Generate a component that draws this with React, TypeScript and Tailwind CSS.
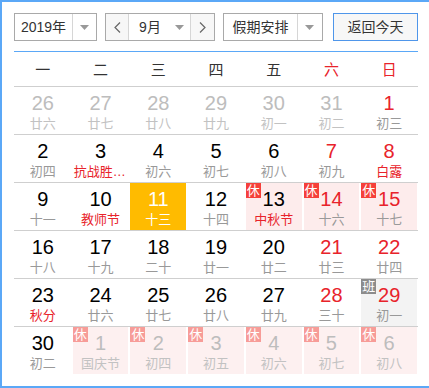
import type { ReactNode } from "react";

type Day = {
  n: number;
  lunar: string;
  other?: boolean;
  red?: boolean;
  fest?: boolean;
  today?: boolean;
  rest?: boolean;
  work?: boolean;
  faded?: boolean;
};

const weeks: Day[][] = [
  [
    { n: 26, lunar: "廿六", other: true },
    { n: 27, lunar: "廿七", other: true },
    { n: 28, lunar: "廿八", other: true },
    { n: 29, lunar: "廿九", other: true },
    { n: 30, lunar: "初一", other: true },
    { n: 31, lunar: "初二", other: true },
    { n: 1, lunar: "初三", red: true },
  ],
  [
    { n: 2, lunar: "初四" },
    { n: 3, lunar: "抗战胜利纪念日", fest: true },
    { n: 4, lunar: "初六" },
    { n: 5, lunar: "初七" },
    { n: 6, lunar: "初八" },
    { n: 7, lunar: "初九", red: true },
    { n: 8, lunar: "白露", red: true, fest: true },
  ],
  [
    { n: 9, lunar: "十一" },
    { n: 10, lunar: "教师节", fest: true },
    { n: 11, lunar: "十三", today: true },
    { n: 12, lunar: "十四" },
    { n: 13, lunar: "中秋节", fest: true, rest: true },
    { n: 14, lunar: "十六", red: true, rest: true },
    { n: 15, lunar: "十七", red: true, rest: true },
  ],
  [
    { n: 16, lunar: "十八" },
    { n: 17, lunar: "十九" },
    { n: 18, lunar: "二十" },
    { n: 19, lunar: "廿一" },
    { n: 20, lunar: "廿二" },
    { n: 21, lunar: "廿三", red: true },
    { n: 22, lunar: "廿四", red: true },
  ],
  [
    { n: 23, lunar: "秋分", fest: true },
    { n: 24, lunar: "廿六" },
    { n: 25, lunar: "廿七" },
    { n: 26, lunar: "廿八" },
    { n: 27, lunar: "廿九" },
    { n: 28, lunar: "三十", red: true },
    { n: 29, lunar: "初一", red: true, work: true },
  ],
  [
    { n: 30, lunar: "初二" },
    { n: 1, lunar: "国庆节", other: true, rest: true, faded: true },
    { n: 2, lunar: "初四", other: true, rest: true, faded: true },
    { n: 3, lunar: "初五", other: true, rest: true, faded: true },
    { n: 4, lunar: "初六", other: true, rest: true, faded: true },
    { n: 5, lunar: "初七", other: true, rest: true, faded: true },
    { n: 6, lunar: "初八", other: true, rest: true, faded: true },
  ],
];

const weekdays = ["一", "二", "三", "四", "五", "六", "日"];

function Caret() {
  return (
    <svg width="9" height="5" viewBox="0 0 9 5">
      <path d="M0 0h9L4.5 5z" fill="#999" />
    </svg>
  );
}

function Chevron({ left }: { left?: boolean }) {
  return (
    <svg width="7" height="11" viewBox="0 0 7 11">
      <path d={left ? "M6 0.5 1 5.5 6 10.5" : "M1 0.5 6 5.5 1 10.5"} fill="none" stroke="#666" strokeWidth="1.2" />
    </svg>
  );
}

function Select({ label, w, textW }: { label: string; w: string; textW: string }) {
  return (
    <div className={`flex h-[28px] ${w} border border-[#a9a9a9] bg-white`}>
      <div className={`flex ${textW} items-center justify-center border-r border-[#d6d6d6] text-[14px] text-[#333]`}>{label}</div>
      <div className="flex flex-1 items-center justify-center">
        <Caret />
      </div>
    </div>
  );
}

function Cell({ d }: { d: Day }) {
  let bg = "";
  if (d.today) bg = "bg-[#ffbb00]";
  else if (d.rest) bg = d.faded ? "bg-[#fdf0f0]" : "bg-[#fdecec]";
  else if (d.work) bg = "bg-[#f3f3f3]";

  let numColor = "text-black";
  if (d.today) numColor = "text-white";
  else if (d.other) numColor = "text-[#bdbdbd]";
  else if (d.red) numColor = "text-[#e8232b]";

  let lunarColor = "text-[#999]";
  if (d.today) lunarColor = "text-white";
  else if (d.other) lunarColor = "text-[#c2c2c2]";
  else if (d.fest) lunarColor = "text-[#e8232b]";

  let badge: ReactNode = null;
  if (d.rest) {
    badge = (
      <span
        className={`absolute left-0 top-0 h-[15px] w-[15px] text-center text-[13px] leading-[15px] text-white ${
          d.faded ? "bg-[#f79c98]" : "bg-[#f5403a]"
        }`}
      >
        休
      </span>
    );
  } else if (d.work) {
    badge = (
      <span className="absolute left-0 top-0 h-[15px] w-[15px] bg-[#8c8c8c] text-center text-[13px] leading-[15px] text-white">
        班
      </span>
    );
  }

  return (
    <div className="px-px">
      <div className={`relative h-[47px] pt-[5px] text-center ${bg}`}>
        {badge}
        <div className={`text-[20px] leading-[22px] ${numColor}`}>{d.n}</div>
        <div className={`mt-[2px] truncate px-[1px] text-[13px] leading-[16px] ${lunarColor}`}>{d.lunar}</div>
      </div>
    </div>
  );
}

export default function App() {
  return (
    <div className="w-[429px] overflow-hidden bg-white" style={{ fontFamily: '"Liberation Sans", "Noto Sans CJK SC", sans-serif' }}>
      <div className="h-[388px] w-[432px] border-2 border-[#5ba8f7] pl-[12px] pr-[12px] pt-[11px]">
        <div className="flex items-center">
          <Select label="2019年" w="w-[84px]" textW="w-[58px]" />
          <div className="ml-[8px] flex h-[28px] w-[111px] border border-[#a9a9a9] bg-white">
            <div className="flex w-[23px] items-center justify-center border-r border-[#d6d6d6] bg-[#f7f7f7]">
              <Chevron left />
            </div>
            <div className="flex flex-1 items-center justify-center gap-[14px] pl-[4px] text-[14px] text-[#333]">
              <span>9月</span>
              <Caret />
            </div>
            <div className="flex w-[24px] items-center justify-center border-l border-[#d6d6d6] bg-[#f7f7f7]">
              <Chevron />
            </div>
          </div>
          <div className="ml-[8px]">
            <Select label="假期安排" w="w-[100px]" textW="w-[74px]" />
          </div>
          <button className="ml-[10px] h-[28px] w-[86px] border border-[#4f96ea] bg-[#f7f7f7] text-[14px] text-[#333]">
            返回今天
          </button>
        </div>

        <div className="mt-[10px] w-[404px] border-t border-[#5ba8f7]">
          <div className="grid h-[35px] grid-cols-7 items-center border-b border-[#cfcfcf] pt-[2px] text-center text-[15px]">
            {weekdays.map((w, i) => (
              <div key={w} className={i >= 5 ? "text-[#e8232b]" : "text-[#333]"}>
                {w}
              </div>
            ))}
          </div>
          {weeks.map((week, i) => (
            <div key={i} className={`grid grid-cols-7 ${i < weeks.length - 1 ? "border-b border-[#cfcfcf]" : ""}`}>
              {week.map((d, j) => (
                <Cell key={j} d={d} />
              ))}
            </div>
          ))}
        </div>
      </div>
    </div>
  );
}
